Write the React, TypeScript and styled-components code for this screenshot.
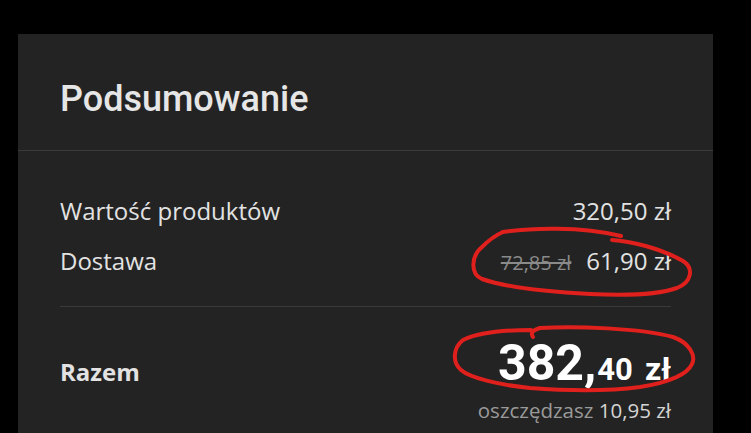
import React from "react";
import styled, { createGlobalStyle } from "styled-components";

const GlobalStyle = createGlobalStyle`
	body {
		margin: 0;
		background: #000;
	}
`;

const Page = styled.div`
	padding: 34px 0 0 18px;
`;

const Card = styled.section`
	position: relative;
	width: 695px;
	background: #232323;
	padding-bottom: 40px;
	font-family: "Open Sans", sans-serif;
	color: #e2e2e2;
`;

const Header = styled.header`
	padding: 44px 42px 29px;
	border-bottom: 1px solid #3a3a3a;
`;

const Title = styled.h2`
	margin: 0;
	font-family: Roboto, sans-serif;
	font-weight: 500;
	font-size: 36px;
	line-height: 1.2;
	color: #e6e6e6;
`;

const Content = styled.div`
	padding: 0 42px;
`;

const Lines = styled.div`
	display: flex;
	flex-direction: column;
	gap: 22px;
	padding: 46px 0 29px;
	border-bottom: 1px solid #3a3a3a;
`;

const Row = styled.div`
	display: flex;
	justify-content: space-between;
	align-items: baseline;
	font-size: 24px;
	line-height: 28px;
`;

const Prices = styled.div`
	display: flex;
	align-items: baseline;
	gap: 15px;
`;

const OldPrice = styled.span`
	font-size: 20px;
	color: #8a8a8a;
	text-decoration: line-through;
`;

const TotalRow = styled.div`
	display: flex;
	justify-content: space-between;
	align-items: flex-start;
	padding-top: 32px;
`;

const TotalLabel = styled.span`
	margin-top: 19px;
	font-size: 24px;
	line-height: 28px;
	font-weight: 700;
`;

const TotalBox = styled.div`
	text-align: right;
`;

const BigPrice = styled.div`
	font-family: Roboto, sans-serif;
	font-weight: 700;
	font-size: 50px;
	line-height: 48px;
	color: #fff;
`;

const Fraction = styled.span`
	margin-left: 1px;
	font-size: 31px;
`;

const Currency = styled.span`
	margin-left: 12px;
	font-size: 32px;
`;

const Savings = styled.div`
	margin-top: 3px;
	font-size: 20.5px;
	line-height: 26px;
	color: #9a9a9a;

	b {
		font-weight: 400;
		color: #d4d4d4;
	}
`;

const Scribbles = styled.svg`
	position: absolute;
	left: 0;
	top: 0;
	pointer-events: none;
`;

const Marks = () => (
	<Scribbles width="695" height="400" viewBox="18 34 695 400">
		<g fill="none" stroke="#e0201c" strokeWidth="4" strokeLinecap="round" strokeLinejoin="round">
			<path d="M503 232 C530 228 580 226 621 236" />
			<path d="M612 240 C630 241 660 248 683 261 C694 268 692 282 677 288 C660 294 630 296 590 294 C550 292 505 287 482 279 C470 274 471 256 482 247 C489 240 496 235 503 232" />
			<path d="M533 337 C530 333 533 330 540 328 C575 326 640 328 673 337 C690 343 696 356 692 364 C688 373 672 382 640 387 C610 391 570 391 530 388 C500 385 470 378 461 370 C452 362 453 348 463 340 C480 332 505 330 531 330" />
		</g>
	</Scribbles>
);

export default function App() {
	return (
		<Page>
			<GlobalStyle />
			<Card>
				<Header>
					<Title>Podsumowanie</Title>
				</Header>
				<Content>
					<Lines>
						<Row>
							<span>Wartość produktów</span>
							<span>320,50 zł</span>
						</Row>
						<Row>
							<span>Dostawa</span>
							<Prices>
								<OldPrice>72,85 zł</OldPrice>
								<span>61,90 zł</span>
							</Prices>
						</Row>
					</Lines>
					<TotalRow>
						<TotalLabel>Razem</TotalLabel>
						<TotalBox>
							<BigPrice>
								382,<Fraction>40</Fraction>
								<Currency>zł</Currency>
							</BigPrice>
							<Savings>
								oszczędzasz <b>10,95 zł</b>
							</Savings>
						</TotalBox>
					</TotalRow>
				</Content>
				<Marks />
			</Card>
		</Page>
	);
}
